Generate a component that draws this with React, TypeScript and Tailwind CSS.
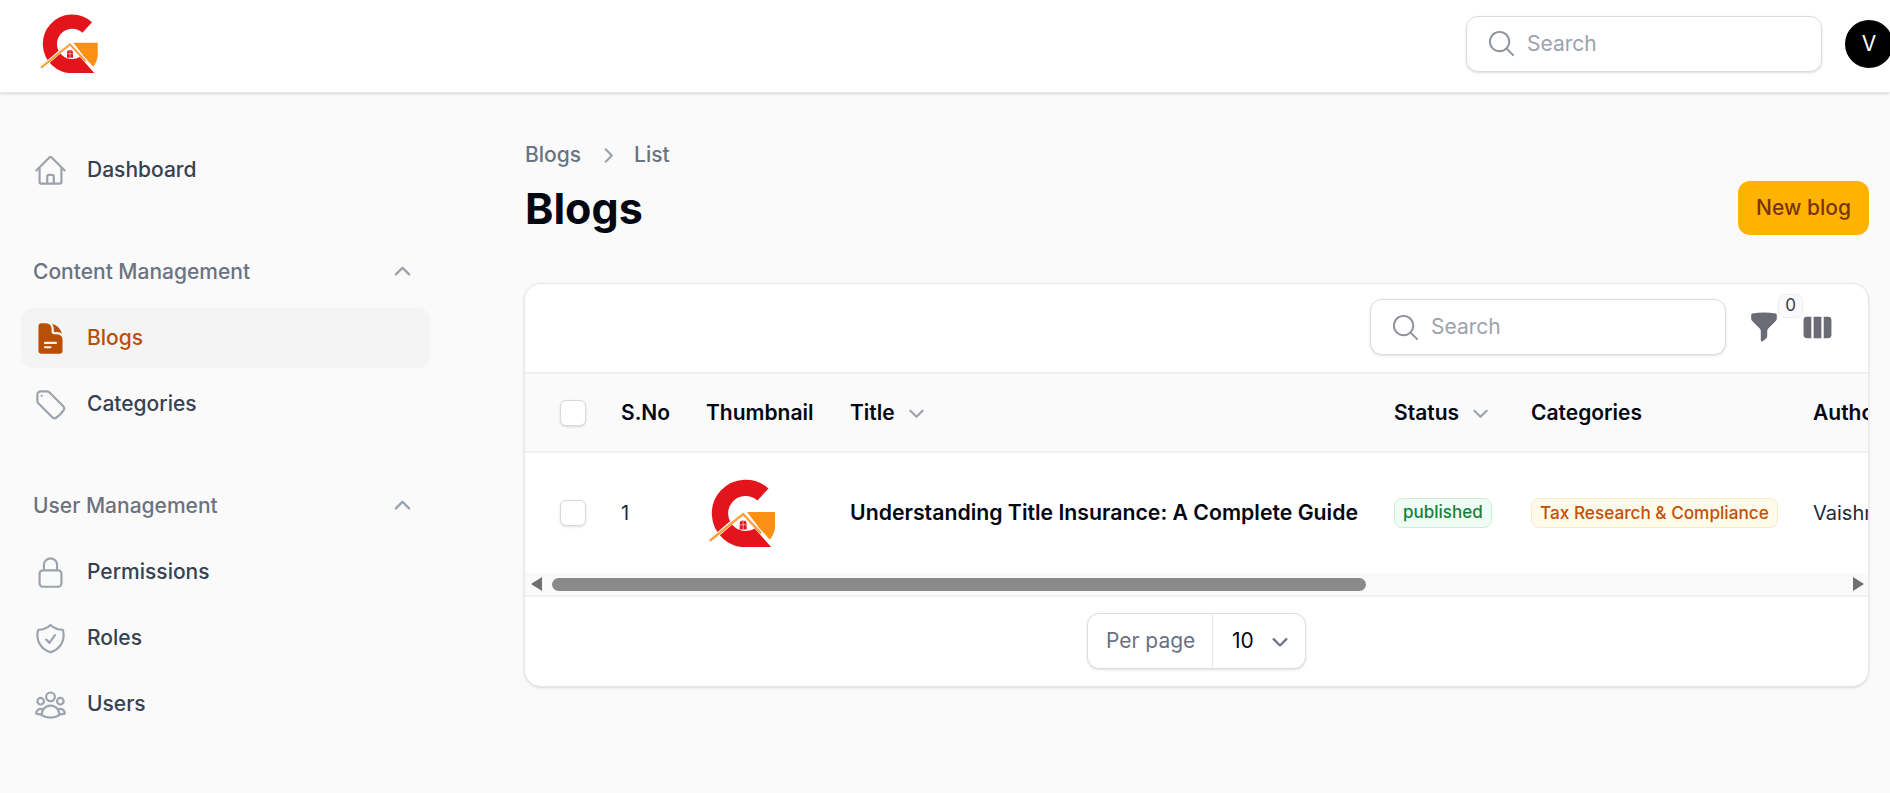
import type { ReactNode } from "react";
import {
  HiDocumentText,
  HiMagnifyingGlass,
  HiMiniChevronDown,
  HiMiniChevronUp,
  HiMiniFunnel,
  HiMiniViewColumns,
  HiOutlineHome,
  HiOutlineLockClosed,
  HiOutlineShieldCheck,
  HiOutlineTag,
  HiOutlineUserGroup,
  HiMiniChevronRight,
} from "react-icons/hi2";

function Logo({ className }: { className: string }) {
  return (
    <svg viewBox="122 40 170 175" className={className}>
      <path d="M261 80A66 66 0 1 0 266 172" fill="none" stroke="#e3141b" strokeWidth="42" />
      <path d="M225 215L266 172L285 215Z" fill="#e3141b" />
      <path d="M220 125H292V165Q290 185 276 198Z" fill="#fb9014" />
      <path d="M124 200L210 127L287 213" fill="none" stroke="#fff" strokeWidth="10" />
      <path d="M124 199L210 130L256 180" fill="none" stroke="#f9a03a" strokeWidth="6" />
      <path d="M201 170V156A9 9 0 0 1 219 156V170Z" fill="#e3141b" />
      <path d="M210 146V170M201 158H219" stroke="#fff" strokeWidth="1.5" />
    </svg>
  );
}

function SearchBox({ width }: { width: string }) {
  return (
    <div className={`flex h-[56px] items-center rounded-[12px] border border-[#dcdcdf] bg-white pl-[19px] shadow-sm ${width}`}>
      <HiMagnifyingGlass className="h-[31px] w-[31px] text-[#8f939b]" />
      <span className="ml-[10px] text-[21px] text-[#9ca3af]">Search</span>
    </div>
  );
}

function NavRow({ icon, label, active }: { icon: ReactNode; label: string; active?: boolean }) {
  return (
    <div className={`flex h-[60px] items-center gap-[19px] rounded-[12px] px-[12px] ${active ? "bg-[#f4f4f5]" : ""}`}>
      {icon}
      <span className={`text-[21px] font-medium ${active ? "text-[#b94f04]" : "text-[#374151]"}`}>{label}</span>
    </div>
  );
}

function NavGroup({ label, children }: { label: string; children: ReactNode }) {
  return (
    <div className="mt-[54px]">
      <div className="mb-[18px] flex h-[36px] items-center justify-between px-[12px]">
        <span className="text-[21px] font-medium text-[#6b7280]">{label}</span>
        <HiMiniChevronUp className="h-[31px] w-[31px] text-[#9ca3af]" />
      </div>
      <div className="flex flex-col gap-[6px]">{children}</div>
    </div>
  );
}

const iconCls = "h-[35px] w-[35px] text-[#9ca3af]";

function Sidebar() {
  return (
    <aside className="w-[452px] shrink-0 pl-[21px] pr-[22px] pt-[47px]">
      <NavRow icon={<HiOutlineHome className={iconCls} />} label="Dashboard" />
      <NavGroup label="Content Management">
        <NavRow active icon={<HiDocumentText className="h-[35px] w-[35px] text-[#b94f04]" />} label="Blogs" />
        <NavRow icon={<HiOutlineTag className={iconCls} />} label="Categories" />
      </NavGroup>
      <NavGroup label="User Management">
        <NavRow icon={<HiOutlineLockClosed className={iconCls} />} label="Permissions" />
        <NavRow icon={<HiOutlineShieldCheck className={iconCls} />} label="Roles" />
        <NavRow icon={<HiOutlineUserGroup className={iconCls} />} label="Users" />
      </NavGroup>
    </aside>
  );
}

function Checkbox() {
  return <div className="h-[26px] w-[26px] rounded-[6px] border border-[#d9d9dc] bg-white shadow-sm" />;
}

function BlogTable() {
  return (
    <div className="overflow-hidden">
      <table className="w-[1500px] table-fixed border-collapse text-left text-[21px]">
        <thead>
          <tr className="h-[78px] border-b-2 border-[#f0f0f1] bg-[#fafafa] text-[#030712]">
            <th className="w-[79px] pl-[35px]">
              <Checkbox />
            </th>
            <th className="w-[85px] pl-[17px] font-semibold">S.No</th>
            <th className="w-[144px] pl-[17px] font-semibold">Thumbnail</th>
            <th className="w-[544px] pl-[17px] font-semibold">
              <div className="flex items-center gap-[7px]">
                Title
                <HiMiniChevronDown className="h-[29px] w-[29px] text-[#9ca3af]" />
              </div>
            </th>
            <th className="w-[137px] pl-[17px] font-semibold">
              <div className="flex items-center gap-[7px]">
                Status
                <HiMiniChevronDown className="h-[29px] w-[29px] text-[#9ca3af]" />
              </div>
            </th>
            <th className="w-[282px] pl-[17px] font-semibold">Categories</th>
            <th className="pl-[17px] font-semibold">Author</th>
          </tr>
        </thead>
        <tbody>
          <tr className="h-[121px]">
            <td className="pl-[35px]">
              <Checkbox />
            </td>
            <td className="pl-[17px] text-[20px] text-[#1f2937]">1</td>
            <td className="pl-[17px]">
              <Logo className="ml-[3px] h-[68px] w-[66px]" />
            </td>
            <td className="pl-[17px] text-[21.25px] font-semibold whitespace-nowrap text-[#030712]">
              Understanding Title Insurance: A Complete Guide
            </td>
            <td className="pl-[17px]">
              <div className="flex">
                <span className="flex h-[30px] items-center rounded-[8px] border border-[#cdeed9] bg-[#f0fdf4] px-[8px] text-[17px] font-medium text-[#16803c]">
                  published
                </span>
              </div>
            </td>
            <td className="pl-[17px]">
              <div className="flex">
                <span className="flex h-[30px] items-center rounded-[8px] border border-[#fde9c4] bg-[#fffbeb] px-[8px] text-[17.2px] font-medium whitespace-nowrap text-[#c2500a]">
                  Tax Research &amp; Compliance
                </span>
              </div>
            </td>
            <td className="pl-[17px] text-[20px] whitespace-nowrap text-[#1f2937]">Vaishnavi</td>
          </tr>
        </tbody>
      </table>
    </div>
  );
}

function ScrollTrack() {
  return (
    <div className="flex h-[24px] items-center border-b-2 border-[#f0f0f1] bg-[#fafafa] pl-[6px] pr-[4px]">
      <svg viewBox="0 0 11 14" className="h-[14px] w-[11px] fill-[#6f6f6f]">
        <path d="M11 0V14L0 7Z" />
      </svg>
      <div className="ml-[10px] h-[13px] w-[814px] rounded-full bg-[#8a8a8a]" />
      <svg viewBox="0 0 11 14" className="ml-auto h-[14px] w-[11px] fill-[#6f6f6f]">
        <path d="M0 0V14L11 7Z" />
      </svg>
    </div>
  );
}

function PerPage() {
  return (
    <div className="flex h-[89px] items-center justify-center pb-[2px]">
      <div className="flex h-[56px] w-[219px] items-center rounded-[12px] border border-[#dcdcdf] bg-white text-[21px] shadow-sm">
        <span className="flex h-full w-[125px] items-center border-r border-[#e5e7eb] pl-[18px] text-[#6b7280]">Per page</span>
        <span className="ml-[19px] text-[#030712]">10</span>
        <HiMiniChevronDown className="ml-[11px] h-[30px] w-[30px] text-[#6b7280]" />
      </div>
    </div>
  );
}

export default function App() {
  return (
    <div className="flex h-screen flex-col overflow-hidden bg-[#fafafa] font-['Inter',sans-serif]">
      <header className="flex h-[93px] shrink-0 items-center justify-between border-b border-[#e5e7eb] bg-white pb-[5px] pl-[40px] shadow-sm">
        <Logo className="h-[59px] w-[58px]" />
        <div className="flex items-center gap-[23px]">
          <SearchBox width="w-[356px]" />
          <div className="mr-[-3px] flex h-[48px] w-[48px] items-center justify-center rounded-full bg-black text-[21px] text-white">V</div>
        </div>
      </header>
      <div className="flex flex-1">
        <Sidebar />
        <main className="min-w-0 flex-1 pl-[72px] pr-[21px] pt-[48px]">
          <div className="ml-px flex h-[28px] items-center gap-[12px] text-[21px] font-medium text-[#6b7280]">
            <span>Blogs</span>
            <HiMiniChevronRight className="h-[29px] w-[29px] text-[#9ca3af]" />
            <span>List</span>
          </div>
          <div className="mt-[12px] flex h-[54px] items-center justify-between">
            <h1 className="ml-px text-[43px] font-bold text-[#030712]">Blogs</h1>
            <button className="h-[54px] w-[131px] rounded-[12px] bg-[#ffb300] text-[21px] font-medium text-[#78350f]">New blog</button>
          </div>
          <section className="mt-[48px] overflow-hidden rounded-[17px] border border-[#e5e7eb] bg-white shadow-sm">
            <div className="flex h-[90px] items-center justify-end gap-[22px] border-b-2 border-[#f0f0f1] pb-[2px] pr-[35px]">
              <SearchBox width="w-[356px]" />
              <div className="relative">
                <HiMiniFunnel className="h-[32px] w-[32px] text-[#6b6b76]" />
                <span className="absolute left-[30px] top-[-17px] flex h-[24px] w-[25px] items-center justify-center rounded-[7px] border border-[#eeeeef] bg-[#fafafa] text-[17px] text-[#374151]">0</span>
              </div>
              <HiMiniViewColumns className="h-[31px] w-[31px] text-[#6b6b76]" />
            </div>
            <BlogTable />
            <ScrollTrack />
            <PerPage />
          </section>
        </main>
      </div>
    </div>
  );
}
